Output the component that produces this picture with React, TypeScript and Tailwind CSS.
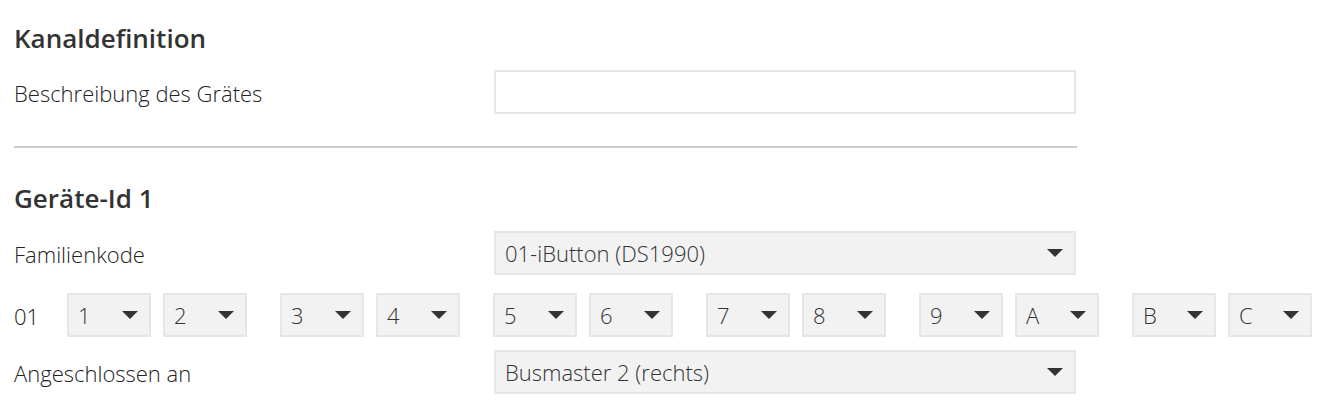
import React from 'react';

const font = { fontFamily: '"Open Sans", "Noto Sans", sans-serif' };

function Caret() {
  return (
    <svg width="16" height="8" viewBox="0 0 16 8" className="shrink-0">
      <polygon points="0,0 16,0 8,8" fill="#333333" />
    </svg>
  );
}

function Select({ value, className = '' }: { value: string; className?: string }) {
  return (
    <div
      className={`flex h-[44px] items-center justify-between border-2 border-[#e6e6e6] bg-[#f2f2f2] pl-[9px] pr-[11px] text-[22px] font-light text-[#333] ${className}`}
    >
      <span>{value}</span>
      <Caret />
    </div>
  );
}

const pairs = [
  ['1', '2'],
  ['3', '4'],
  ['5', '6'],
  ['7', '8'],
  ['9', 'A'],
  ['B', 'C'],
];

export default function App() {
  return (
    <div className="min-h-[406px] bg-white pl-[14px] pt-[20px] text-[#222]" style={font}>
      <h2 className="h-9 text-[26px] font-semibold leading-9 text-[#333]">Kanaldefinition</h2>

      <div className="mt-[14px] flex items-center">
        <label className="w-[480px] pt-[3px] text-[22px] font-light">Beschreibung des Grätes</label>
        <input className="h-[44px] w-[582px] border-2 border-[#e6e6e6] bg-white outline-none" />
      </div>

      <div className="mt-[32px] h-[2px] w-[1063px] bg-[#cccccc]" />

      <h2 className="mt-[32px] h-9 text-[26px] font-semibold leading-9 text-[#333]">Geräte-Id 1</h2>

      <div className="mt-[15px] flex items-center">
        <label className="w-[480px] pt-[3px] text-[22px] font-light">Familienkode</label>
        <Select value="01-iButton (DS1990)" className="w-[582px]" />
      </div>

      <div className="mt-[18px] flex items-center">
        <span className="w-[53px] pt-[2px] text-[22px] font-light">01</span>
        <div className="flex gap-[33px]">
          {pairs.map((p) => (
            <div key={p[0]} className="flex gap-[12px]">
              {p.map((v) => (
                <Select key={v} value={v} className="h-[43px] w-[84px]" />
              ))}
            </div>
          ))}
        </div>
      </div>

      <div className="mt-[13px] flex items-center">
        <label className="w-[480px] pt-[3px] text-[22px] font-light">Angeschlossen an</label>
        <Select value="Busmaster 2 (rechts)" className="w-[582px]" />
      </div>
    </div>
  );
}
